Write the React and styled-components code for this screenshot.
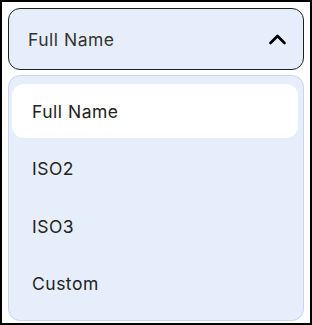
import React, { useState } from 'react'
import styled, { createGlobalStyle } from 'styled-components'

const GlobalStyle = createGlobalStyle`
  * { box-sizing: border-box; }
  body {
    margin: 0;
    background: #fff;
    font-family: Inter, "Noto Sans", sans-serif;
  }
`

const Frame = styled.div`
  width: 312px;
  height: 325px;
  border: 2px solid #000;
  padding: 6px 6px 2px;
  display: flex;
  flex-direction: column;
  gap: 5px;
  background: #fff;
`

const Trigger = styled.button`
  flex-shrink: 0;
  height: 62px;
  width: 100%;
  display: flex;
  align-items: center;
  justify-content: space-between;
  padding: 0 17px 0 19px;
  background: #e7eefb;
  border: 1px solid #1f1f1f;
  border-radius: 12px;
  font-family: inherit;
  font-size: 17.5px;
  letter-spacing: 0.5px;
  color: #333;
  cursor: pointer;
`

const Menu = styled.ul`
  flex-shrink: 0;
  list-style: none;
  margin: 0;
  padding: 8px 5px 9.5px 3px;
  background: #e7eefb;
  border: 1px solid #c9d5ee;
  border-radius: 12px;
  display: flex;
  flex-direction: column;
  gap: 3.5px;
`

const Item = styled.li`
  height: 54px;
  display: flex;
  align-items: center;
  padding-left: 20px;
  border-radius: 12px;
  font-size: 17.5px;
  letter-spacing: 0.5px;
  color: #222;
  background: ${p => (p.$active ? '#fff' : 'transparent')};
  cursor: pointer;
`

const Chevron = () => (
  <svg width="18" height="12" viewBox="0 0 18 12" fill="none">
    <polyline points="2.5,10 9.5,3 16.5,10" stroke="#000" strokeWidth="2.6" strokeLinecap="round" strokeLinejoin="round" />
  </svg>
)

const options = ['Full Name', 'ISO2', 'ISO3', 'Custom']

export default function App() {
  const [value, setValue] = useState('Full Name')
  return (
    <>
      <GlobalStyle />
      <Frame>
        <Trigger>
          <span>{value}</span>
          <Chevron />
        </Trigger>
        <Menu>
          {options.map(o => (
            <Item key={o} $active={o === value} onClick={() => setValue(o)}>
              {o}
            </Item>
          ))}
        </Menu>
      </Frame>
    </>
  )
}
